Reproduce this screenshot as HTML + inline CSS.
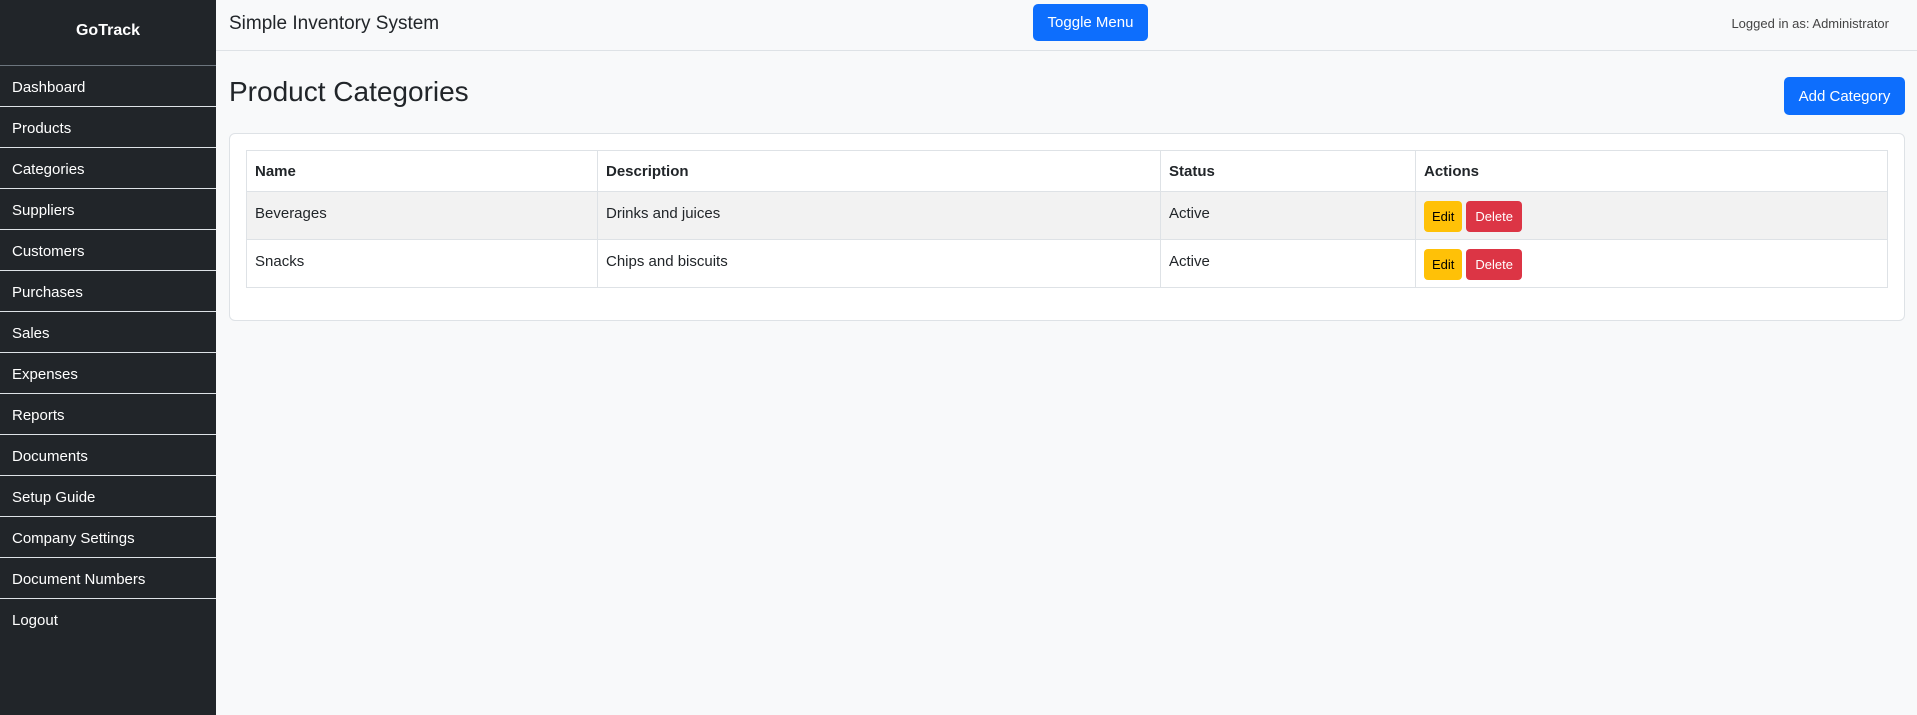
<!DOCTYPE html>
<html><head><meta charset="utf-8"><style>
*{box-sizing:border-box;margin:0;padding:0}
body{width:1917px;height:715px;overflow:hidden;background:#f8f9fa;font-family:"Liberation Sans",sans-serif;color:#212529;font-size:16px;position:relative}
.sb{position:absolute;left:0;top:0;width:216px;height:715px;background:#212529;color:#fff}
.brand{height:66px;border-bottom:1px solid #6c757d;text-align:center;font-weight:bold;font-size:16px;line-height:62px}
.sb a{display:block;height:41px;line-height:44px;padding-left:12px;border-bottom:1px solid #dee2e6;color:#fff;text-decoration:none;font-size:15px}
.sb a:last-child{border-bottom:none}
.top{position:absolute;left:216px;top:0;right:0;height:51px;border-bottom:1px solid #dee2e6}
.title{position:absolute;left:13px;top:13px;font-size:19px}
.btn{position:absolute;background:#0d6efd;color:#fff;border-radius:5px;text-align:center;font-size:15px}
.user{position:absolute;right:28px;top:16px;font-size:13px;color:#444}
h3{position:absolute;left:229px;top:76px;font-size:28px;font-weight:500}
.card{position:absolute;left:229px;top:133px;width:1676px;height:188px;background:#fff;border:1px solid #dee2e6;border-radius:6px}
table{position:absolute;left:246px;top:150px;width:1642px;border-collapse:collapse}
td,th{border:1px solid #dee2e6;text-align:left;padding:0 8px;font-size:15px}
th{height:41px;font-weight:bold}
td{height:48px;padding-bottom:4px}
tr.s td{background:#f2f2f2}
.e,.d{display:inline-block;height:31px;line-height:31px;border-radius:4px;font-size:13px;padding:0 8px;vertical-align:middle;margin-top:6px}
.e{background:#ffc107;color:#000}.d{background:#dc3545;color:#fff;margin-left:4px;padding:0 9px}
</style></head><body>
<div class="sb"><div class="brand">GoTrack</div>
<a>Dashboard</a><a>Products</a><a>Categories</a><a>Suppliers</a><a>Customers</a><a>Purchases</a><a>Sales</a><a>Expenses</a><a>Reports</a><a>Documents</a><a>Setup Guide</a><a>Company Settings</a><a>Document Numbers</a><a>Logout</a></div>
<div class="top"><div class="title">Simple Inventory System</div>
<div class="btn" style="left:817px;top:4px;width:115px;height:37px;line-height:38px">Toggle Menu</div>
<div class="user">Logged in as: Administrator</div></div>
<h3>Product Categories</h3>
<div class="btn" style="left:1784px;top:77px;width:121px;height:38px;line-height:40px">Add Category</div>
<div class="card"></div>
<table>
<tr><th style="width:351px">Name</th><th style="width:563px">Description</th><th style="width:255px">Status</th><th>Actions</th></tr>
<tr class="s"><td>Beverages</td><td>Drinks and juices</td><td>Active</td><td><span class="e">Edit</span><span class="d">Delete</span></td></tr>
<tr><td>Snacks</td><td>Chips and biscuits</td><td>Active</td><td><span class="e">Edit</span><span class="d">Delete</span></td></tr>
</table>
</body></html>
